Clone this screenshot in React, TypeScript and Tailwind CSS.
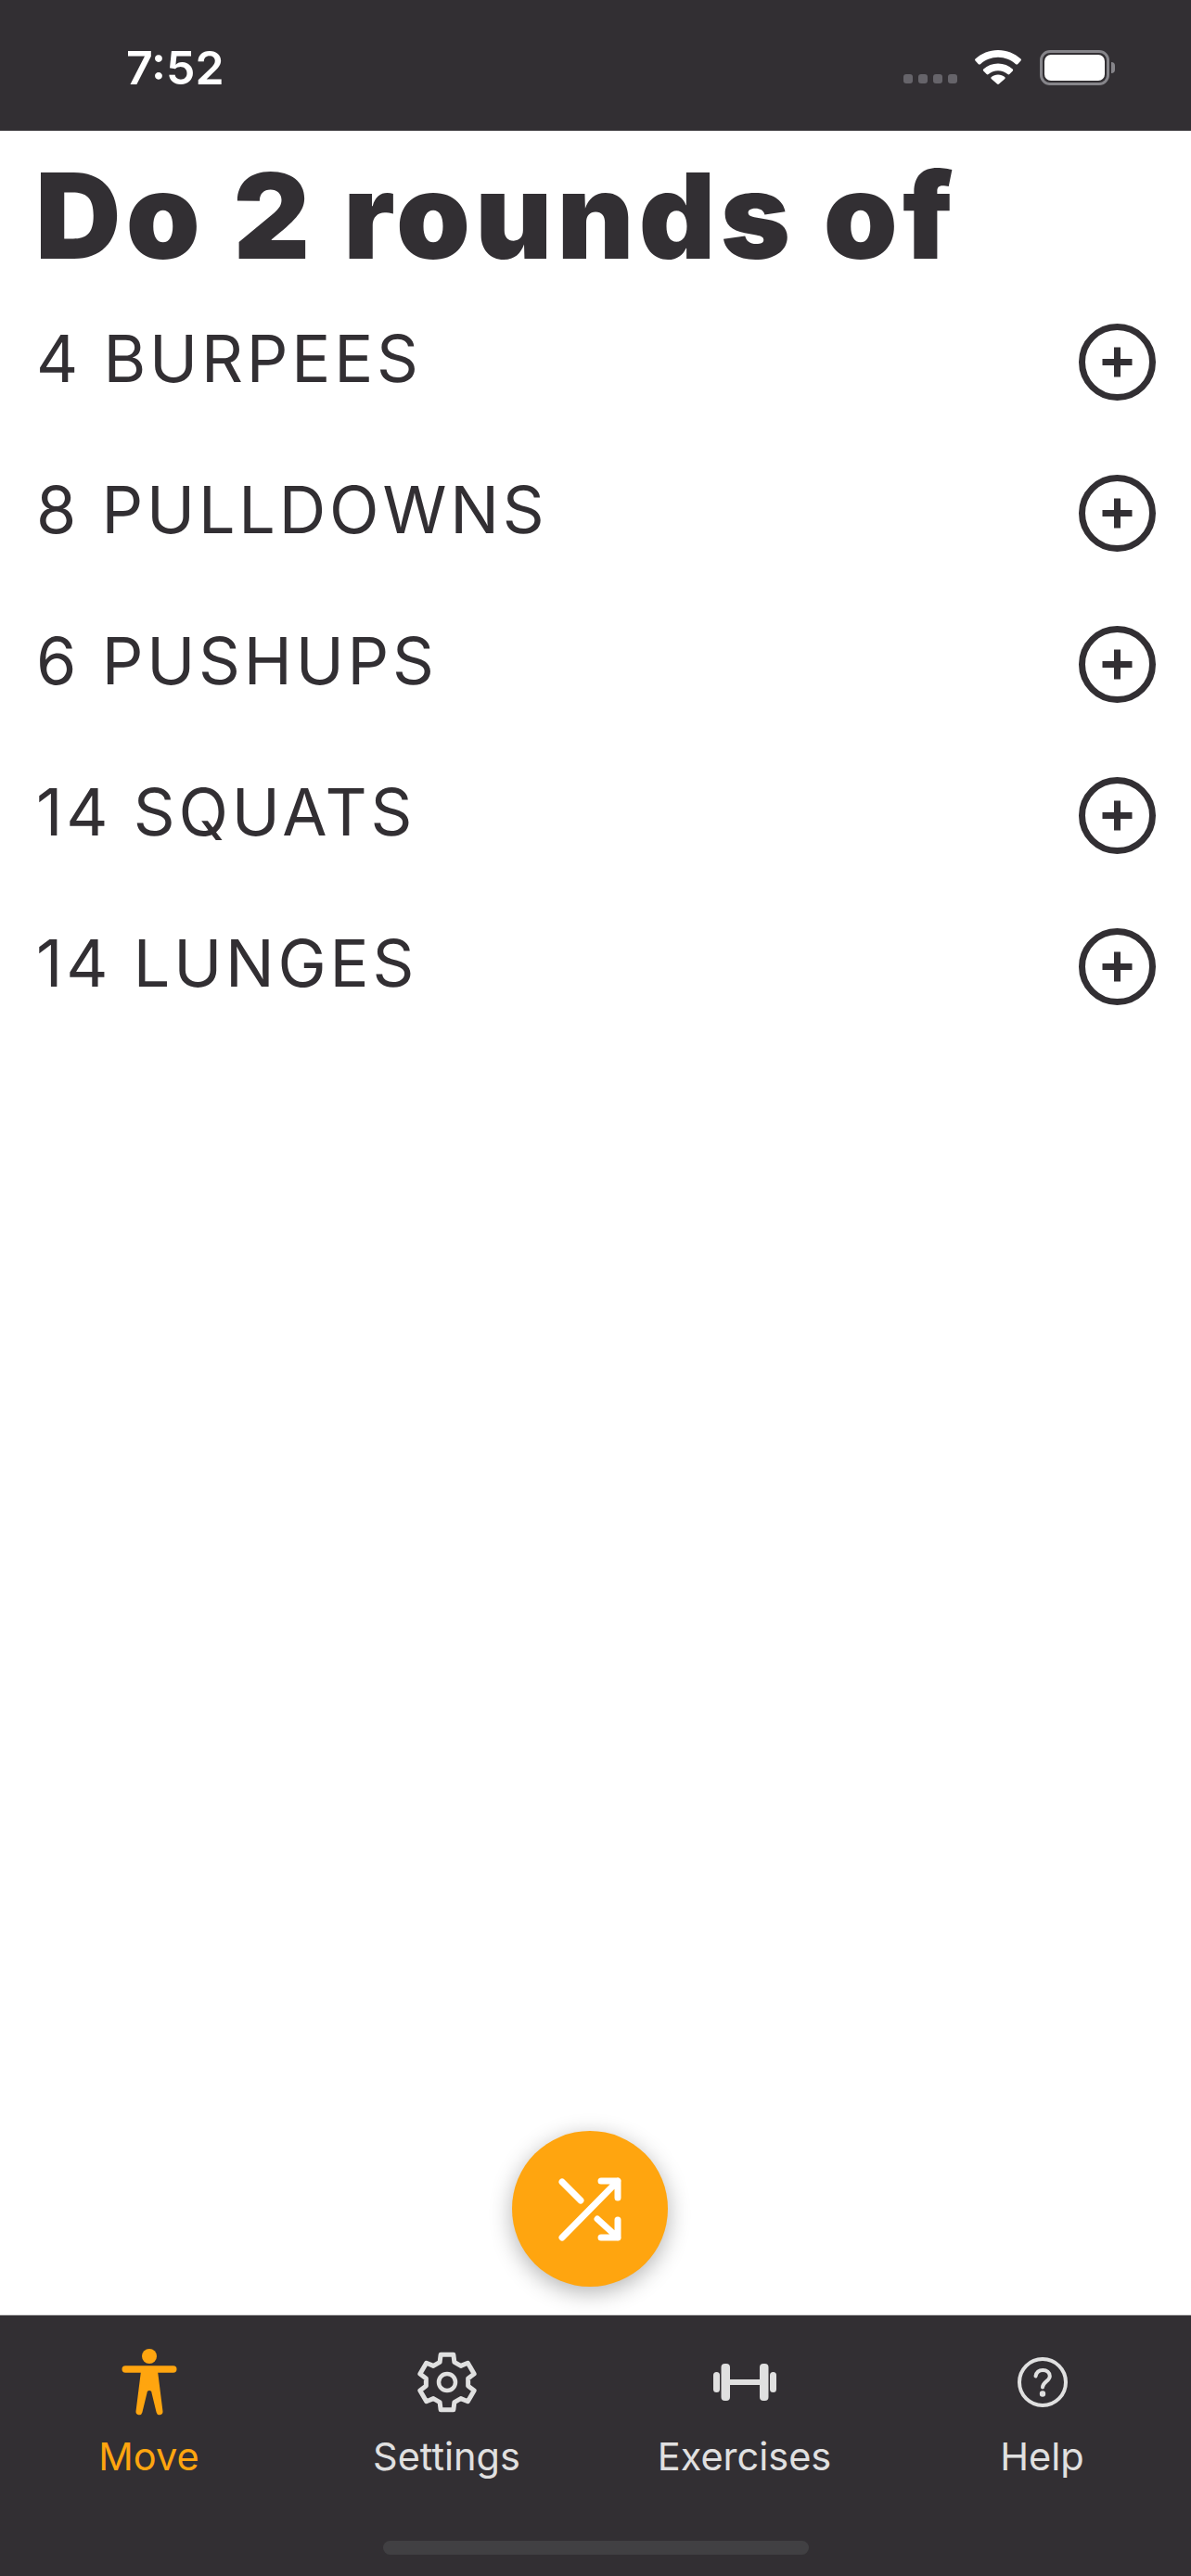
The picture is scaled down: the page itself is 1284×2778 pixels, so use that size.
import React from "react";

const moves = ["4 BURPEES", "8 PULLDOWNS", "6 PUSHUPS", "14 SQUATS", "14 LUNGES"];

const PlusCircle = () => (
    <svg width="83" height="83" viewBox="0 0 83 83" fill="none" stroke="#322f33" strokeWidth="7">
        <circle cx="41.5" cy="41.5" r="38" />
        <path d="M41.5 25.5v32M25.5 41.5h32" />
    </svg>
);

const StatusBar = () => (
    <div className="h-[141px] bg-[#322f33] flex items-start justify-between pl-[136px] pr-[82px] pt-[54px]">
        <span className="text-[50px] leading-[38px] font-semibold text-white font-['Inter',sans-serif]">7:52</span>
        <div className="flex items-end">
            <div className="flex gap-[6px] mb-[2px] mr-[19px]">
                <div className="w-[10px] h-[10px] rounded-[3px] bg-[#66646a]" />
                <div className="w-[10px] h-[10px] rounded-[3px] bg-[#66646a]" />
                <div className="w-[10px] h-[10px] rounded-[3px] bg-[#66646a]" />
                <div className="w-[10px] h-[10px] rounded-[3px] bg-[#66646a]" />
            </div>
            <svg width="50" height="37" viewBox="0 0 50 37" fill="#fff" className="mr-[20px] mb-[1px]">
                <path d="M25 0C15.5 0 7 3.6.5 9.6c-.6.6-.6 1.4 0 2l3.4 3.6c.5.5 1.4.5 2 0C11 10.600 17.700 7.800 25 7.800s14 2.800 19.100 7.400c.6.500 1.500.500 2 0l3.400-3.600c.6-.6.6-1.400 0-2C43 3.600 34.500 0 25 0z" />
                <path d="M25 14.500c-6 0-11.500 2.200-15.700 5.900-.6.600-.6 1.400-.1 2l3.500 3.600c.5.500 1.300.500 1.900.100 2.800-2.400 6.400-3.800 10.400-3.800s7.600 1.400 10.400 3.800c.6.400 1.400.400 1.900-.100l3.500-3.600c.5-.6.500-1.400-.1-2C36.500 16.700 31 14.500 25 14.500z" />
                <path d="M25 26.500c-2.800 0-5.300 1-7.200 2.600-.6.500-.6 1.300-.1 1.800l6.300 5.700c.6.500 1.400.500 2 0l6.300-5.700c.5-.5.500-1.300-.1-1.800-1.900-1.600-4.400-2.600-7.200-2.600z" />
            </svg>
            <div className="flex items-center">
                <div className="w-[75px] h-[38px] rounded-[11px] border-[3px] border-[#86858a] p-[2px]">
                    <div className="w-full h-full rounded-[7px] bg-white" />
                </div>
                <div className="w-[4px] h-[12px] ml-[2px] rounded-r-[4px] bg-[#86858a]" />
            </div>
        </div>
    </div>
);

const MoveIcon = () => (
    <svg width="60" height="72" viewBox="0 0 60 72" fill="#ffa50f">
        <circle cx="30" cy="8" r="8" />
        <rect x="0.500" y="18.300" width="59" height="7.400" rx="3.700" />
        <path d="M21 24h18l5.500 43.600a3.500 3.500 0 0 1-6.900 1L32.500 47.500a2.500 2.500 0 0 0-5 0L22.400 68.600a3.500 3.500 0 0 1-6.900-1z" />
    </svg>
);

// six flat teeth, one pointing straight up
const gearPath = () => {
    const point = (r: number, deg: number) => {
        const a = (deg * Math.PI) / 180;
        return `${(33 + r * Math.cos(a)).toFixed(2)} ${(33 + r * Math.sin(a)).toFixed(2)}`;
    };
    const parts: string[] = [];
    for (let k = 0; k < 6; k++) {
        const a = k * 60 - 90;
        parts.push(point(23, a - 20), point(30.5, a - 13), point(30.5, a + 13), point(23, a + 20));
    }
    return `M${parts.join("L")}Z`;
};

const GearIcon = () => (
    <svg width="66" height="66" viewBox="0 0 66 66" fill="none" stroke="#e0e0e0" strokeWidth="5" strokeLinejoin="round">
        <path d={gearPath()} />
        <circle cx="33" cy="33" r="9" strokeWidth="4.500" />
    </svg>
);

const DumbbellIcon = () => (
    <svg width="68" height="40" viewBox="0 0 68 40" fill="#e0e0e0">
        <rect x="0" y="9" width="7" height="22" rx="3.500" />
        <rect x="8.500" y="0" width="9.500" height="40" rx="4" />
        <rect x="18" y="17" width="32" height="6" />
        <rect x="50" y="0" width="9.500" height="40" rx="4" />
        <rect x="61" y="9" width="7" height="22" rx="3.500" />
    </svg>
);

const HelpIcon = () => (
    <svg width="54" height="54" viewBox="0 0 54 54" fill="none" stroke="#e0e0e0" strokeWidth="4" strokeLinecap="round">
        <circle cx="27" cy="27" r="25" />
        <path d="M19.500 20.500c.8-4 3.800-6.500 7.800-6.500 4.300 0 7.500 2.800 7.500 6.400 0 5.400-7.800 6.100-7.800 12.100" />
        <circle cx="27" cy="39.500" r="1.200" fill="#e0e0e0" />
    </svg>
);

const ShuffleIcon = () => (
    <svg width="68" height="70" viewBox="0 0 68 70" fill="none" stroke="#fff" strokeWidth="7" strokeLinecap="round" strokeLinejoin="round">
        <path d="M4 66L64 5M46 5h18v18" />
        <path d="M4 6l20 20" />
        <path d="M42 46l22 20M46 66h18V47" />
    </svg>
);

const tabs = [
    { label: "Move", icon: <MoveIcon />, active: true },
    { label: "Settings", icon: <GearIcon />, active: false },
    { label: "Exercises", icon: <DumbbellIcon />, active: false },
    { label: "Help", icon: <HelpIcon />, active: false },
];

const App: React.FC = () => {
    return (
        <div className="w-[1284px] h-[2778px] flex flex-col bg-white overflow-hidden">
            <StatusBar />
            <div className="flex-1 flex flex-col">
                <h1 className="h-[168px] pl-[38px] pt-[24px] text-[128px] leading-[136px] font-black tracking-[5.2px] text-[#322f33] font-['Inter',sans-serif]">
                    Do 2 rounds of
                </h1>
                {moves.map((move) => (
                    <div key={move} className="h-[163px] flex items-center justify-between pl-[39px] pr-[38px]">
                        <span className="pb-[7px] text-[70px] leading-[80px] tracking-[3.8px] text-[#322f33] font-['Inter',sans-serif]">{move}</span>
                        <PlusCircle />
                    </div>
                ))}
                <div className="mt-auto mb-[30px] ml-[552px] w-[168px] h-[168px] rounded-full bg-[#ffa50f] shadow-[0_6px_24px_rgba(0,0,0,0.3)] flex items-center justify-center">
                    <ShuffleIcon />
                </div>
            </div>
            <div className="h-[282px] bg-[#322f33] border-t border-[#cfcfcf] relative">
                <div className="grid grid-cols-4">
                    {tabs.map((tab) => (
                        <div key={tab.label} className="flex flex-col items-center">
                            <div className="h-[110px] flex items-center justify-center pt-[34px]">{tab.icon}</div>
                            <span className={`mt-[17px] text-[41.5px] leading-[50px] font-['Inter',sans-serif] ${tab.active ? "text-[#ffa50f]" : "text-[#e0e0e0]"}`}>
                                {tab.label}
                            </span>
                        </div>
                    ))}
                </div>
                <div className="absolute left-[413px] top-[243px] w-[459px] h-[15px] rounded-full bg-[#414043]" />
            </div>
        </div>
    );
};

export default App;
